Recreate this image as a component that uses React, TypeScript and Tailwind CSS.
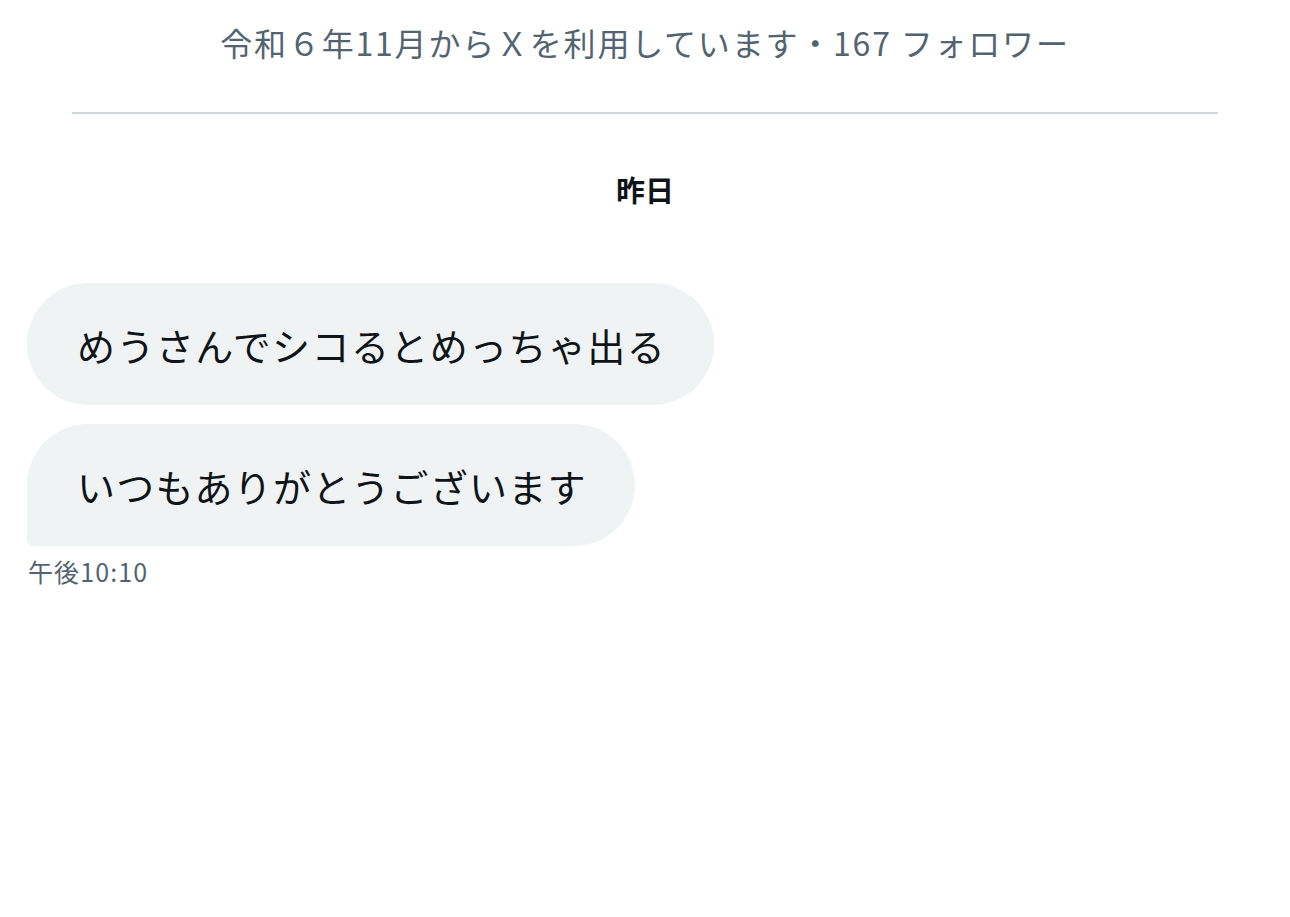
export default function App() {
  return (
    <div
      className="min-h-screen w-full bg-white"
      style={{ fontFamily: '"Noto Sans CJK JP", "Noto Sans", sans-serif' }}
    >
      {/* Profile summary */}
      <div className="pt-[18px] text-center text-[32px] leading-[48px] tracking-[1.8px] text-[#536471]">
        令和６年11月からＸを利用しています・167 フォロワー
      </div>
      <div className="mx-[72px] mt-[46px] h-[2px] bg-[#cfd9de]" />

      {/* Date separator */}
      <div className="mt-[55px] text-center text-[29px] font-bold leading-[40px] text-[#0f1419]">
        昨日
      </div>

      {/* Messages */}
      <div className="mt-[74px] flex flex-col items-start gap-[19px] px-[27px]">
        <div className="flex h-[122px] items-center rounded-[61px] bg-[#eff3f4] pl-[50px] pr-[48px] text-[38px] tracking-[1.4px] text-[#0f1419]">
          めうさんでシコるとめっちゃ出る
        </div>
        <div className="flex h-[122px] items-center rounded-[61px] rounded-bl-[6px] bg-[#eff3f4] pl-[50px] pr-[48px] text-[38px] tracking-[1.2px] text-[#0f1419]">
          いつもありがとうございます
        </div>
      </div>
      <div className="mt-[9px] px-[28px] text-[25px] leading-[32px] tracking-[1.1px] text-[#536471]">
        午後10:10
      </div>
    </div>
  );
}
